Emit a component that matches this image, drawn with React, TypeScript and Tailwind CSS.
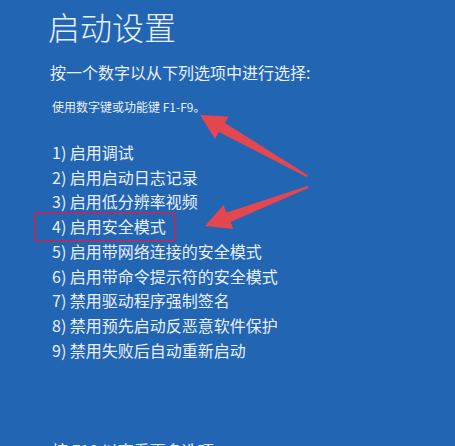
import React from "react";

const options = [
  "1) 启用调试",
  "2) 启用启动日志记录",
  "3) 启用低分辨率视频",
  "4) 启用安全模式",
  "5) 启用带网络连接的安全模式",
  "6) 启用带命令提示符的安全模式",
  "7) 禁用驱动程序强制签名",
  "8) 禁用预先启动反恶意软件保护",
  "9) 禁用失败后自动重新启动",
];

export default function App() {
  return (
    <div
      className="relative w-[455px] h-[446px] overflow-hidden bg-[#2265b3] text-[#eaf0fa]"
      style={{ fontFamily: '"Noto Sans CJK SC", "Noto Sans", sans-serif' }}
    >
      <div className="flex flex-col pl-[48px] pt-[6px]">
        {/* title */}
        <h1 className="text-[32px] leading-[40px] font-light">启动设置</h1>

        <div className="mt-[14px] pl-[2px] text-[16px] leading-[24px]">
          按一个数字以从下列选项中进行选择:
        </div>

        <div className="mt-[14px] pl-[4px] text-[12px] leading-[18px]">
          使用数字键或功能键 F1-F9。
        </div>

        {/* options */}
        <ul className="mt-[24px] pl-[4px] text-[16px] leading-[24.7px]">
          {options.map((o) => (
            <li key={o}>{o}</li>
          ))}
        </ul>

        {/* cut off by the bottom edge, as in the screenshot */}
        <div className="mt-[76px] pl-[4px] text-[16px] leading-[24px]">
          按 F10 以查看更多选项
        </div>
      </div>

      {/* highlight box */}
      <div className="absolute left-[34px] top-[212px] w-[142px] h-[30px] border-2 border-[#a03468] rounded-[2px]" />

      {/* arrows */}
      <svg className="absolute inset-0" width="455" height="446" viewBox="0 0 455 446">
        <defs>
          <filter id="soft" x="-10%" y="-10%" width="120%" height="120%">
            <feGaussianBlur stdDeviation="0.7" />
          </filter>
        </defs>
        <g fill="#e4464f" filter="url(#soft)">
          <polygon points="200,115 228.5,116.5 225,123 307.5,175.1 306.5,176.9 219,132 215,139" />
          <polygon points="205,226 223.5,205 226.5,212.5 307.6,186.1 308.4,187.9 230.5,222 233.5,229" />
        </g>
      </svg>
    </div>
  );
}
